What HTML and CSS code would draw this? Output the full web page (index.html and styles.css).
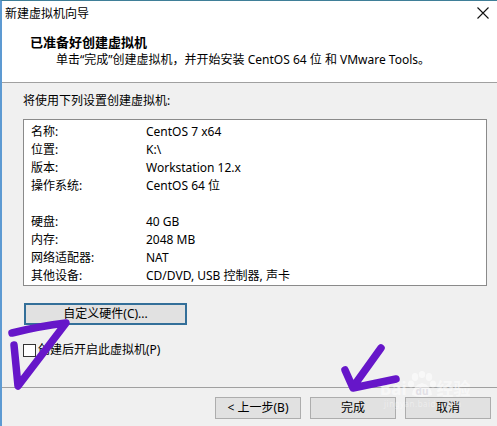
FILE: index.html
```html
<!DOCTYPE html>
<html lang="zh-CN">
<head>
<meta charset="utf-8">
<title>新建虚拟机向导</title>
<link rel="stylesheet" href="styles.css">
</head>
<body>
<div class="window">
  <div class="titlebar">
    <span class="title">新建虚拟机向导</span>
    <svg class="close" width="12" height="12" viewBox="0 0 12 12" aria-hidden="true">
      <path d="M0.5 0.5 L11.5 11.5 M11.5 0.5 L0.5 11.5" stroke="#111" stroke-width="1.1" fill="none"/>
    </svg>
  </div>

  <div class="header">
    <h1 class="header-title">已准备好创建虚拟机</h1>
    <p class="header-sub">单击“完成”创建虚拟机，并开始安装 CentOS 64 位 和 VMware Tools。</p>
  </div>

  <div class="content">
    <p class="intro">将使用下列设置创建虚拟机:</p>
    <div class="summary">
      <div class="row"><span class="key">名称:</span><span class="val">CentOS 7 x64</span></div>
      <div class="row"><span class="key">位置:</span><span class="val">K:\</span></div>
      <div class="row"><span class="key">版本:</span><span class="val">Workstation 12.x</span></div>
      <div class="row"><span class="key">操作系统:</span><span class="val">CentOS 64 位</span></div>
      <div class="row blank"></div>
      <div class="row"><span class="key">硬盘:</span><span class="val">40 GB</span></div>
      <div class="row"><span class="key">内存:</span><span class="val">2048 MB</span></div>
      <div class="row"><span class="key">网络适配器:</span><span class="val">NAT</span></div>
      <div class="row"><span class="key">其他设备:</span><span class="val">CD/DVD, USB 控制器, 声卡</span></div>
    </div>
    <button class="btn btn-focus custom">自定义硬件(C)...</button>
    <label class="check"><span class="box"></span>创建后开启此虚拟机(P)</label>
  </div>

  <div class="footer">
    <button class="btn">&lt; 上一步(B)</button>
    <button class="btn">完成</button>
    <button class="btn">取消</button>
  </div>

  <div class="watermark" aria-hidden="true">
    <div class="wm-logo">
      <span>Bai</span>
      <svg class="paw" width="30" height="28" viewBox="0 0 30 28">
        <g fill="rgba(255,255,255,0.55)">
          <ellipse cx="8" cy="6" rx="3.2" ry="4"/>
          <ellipse cx="15" cy="3.5" rx="3.2" ry="3.5"/>
          <ellipse cx="22" cy="6" rx="3.2" ry="4"/>
          <ellipse cx="4" cy="13" rx="3" ry="3.5"/>
          <ellipse cx="26" cy="13" rx="3" ry="3.5"/>
          <path d="M5 24 Q6 14 15 12 Q24 14 25 24 Q15 28 5 24 Z"/>
        </g>
        <text x="15" y="24" text-anchor="middle" font-size="10" font-family="Noto Sans, sans-serif" font-weight="700" fill="#e2e0e6">du</text>
      </svg>
      <span>经验</span>
    </div>
    <div class="wm-url">jingyan.baidu.com</div>
  </div>

  <svg class="marks" width="497" height="426" viewBox="0 0 497 426" aria-hidden="true">
    <g fill="none" stroke="#6616c9" stroke-width="7.5" stroke-linecap="round" stroke-linejoin="round">
      <path d="M12 333 Q40 326 66 323 L18 386 L14 345"/>
      <path d="M381 348 L353 387 M345 370 L353 388 L396 379"/>
    </g>
  </svg>
</div>
</body>
</html>
```

FILE: styles.css
```css
* {
  box-sizing: border-box;
}

html, body {
  margin: 0;
  padding: 0;
  background: #f0f0f0;
}

body {
  font-family: "Noto Sans", "Noto Sans CJK SC", sans-serif;
  font-size: 12px;
  color: #000;
}

.window {
  position: relative;
  width: 497px;
  height: 426px;
  display: flex;
  flex-direction: column;
  background: #f0f0f0;
  border-top: 1px solid #3f7f98;
  border-left: 2px solid #5d9ad2;
  overflow: hidden;
}

/* title bar */
.titlebar {
  height: 26px;
  display: flex;
  align-items: center;
  justify-content: space-between;
  padding: 0 8px 0 3px;
  background: #fff;
}

.title {
  line-height: 26px;
}

.close {
  display: block;
  margin-top: -2px;
}

/* wizard header */
.header {
  height: 56px;
  background: #fff;
  border-bottom: 1px solid #a0a0a0;
  padding: 6px 0 0 28px;
}

.header-title {
  margin: 0;
  font-size: 13px;
  font-weight: 700;
  line-height: 18px;
}

.header-sub {
  margin: 0 0 0 26px;
  line-height: 18px;
}

/* page body */
.content {
  flex: 1;
  padding: 9px 0 0 21px;
  display: flex;
  flex-direction: column;
  align-items: flex-start;
}

.intro {
  margin: 0;
  line-height: 18px;
}

.summary {
  margin-top: 9px;
  width: 464px;
  height: 167px;
  background: #fff;
  border: 1px solid #8a8a8a;
  padding: 3px 0 0 7px;
}

.row {
  display: flex;
  height: 18px;
  line-height: 18px;
}

.key {
  width: 115px;
  flex: none;
}

.btn {
  font: inherit;
  color: #000;
  width: 86px;
  height: 22px;
  padding: 0;
  background: #e1e1e1;
  border: 1px solid #adadad;
  line-height: 18px;
}

.btn-focus {
  border: 2px solid #336f99;
}

.custom {
  margin: 17px 0 0 1px;
  width: 163px;
}

.check {
  margin-top: 16px;
  display: flex;
  align-items: center;
  gap: 2px;
  line-height: 18px;
}

.box {
  width: 13px;
  height: 13px;
  background: #fff;
  border: 1px solid #333;
}

/* dialog buttons */
.footer {
  height: 39px;
  border-top: 1px solid #a0a0a0;
  padding: 9px 6px 0 0;
  display: flex;
  justify-content: flex-end;
  align-items: flex-start;
  gap: 9px;
}

/* site watermark over the lower right corner */
.watermark {
  position: absolute;
  left: 378px;
  top: 370px;
  color: rgba(255, 255, 255, 0.55);
  pointer-events: none;
}

.wm-logo {
  display: flex;
  align-items: flex-end;
  font-size: 17px;
  font-weight: 700;
  line-height: 20px;
}

.paw {
  display: block;
}

.wm-url {
  font-size: 8px;
  line-height: 10px;
  padding-left: 4px;
  letter-spacing: 0.5px;
  color: rgba(255, 255, 255, 0.4);
}

/* hand-drawn arrows */
.marks {
  position: absolute;
  left: -2px;
  top: -1px;
  pointer-events: none;
}
```
